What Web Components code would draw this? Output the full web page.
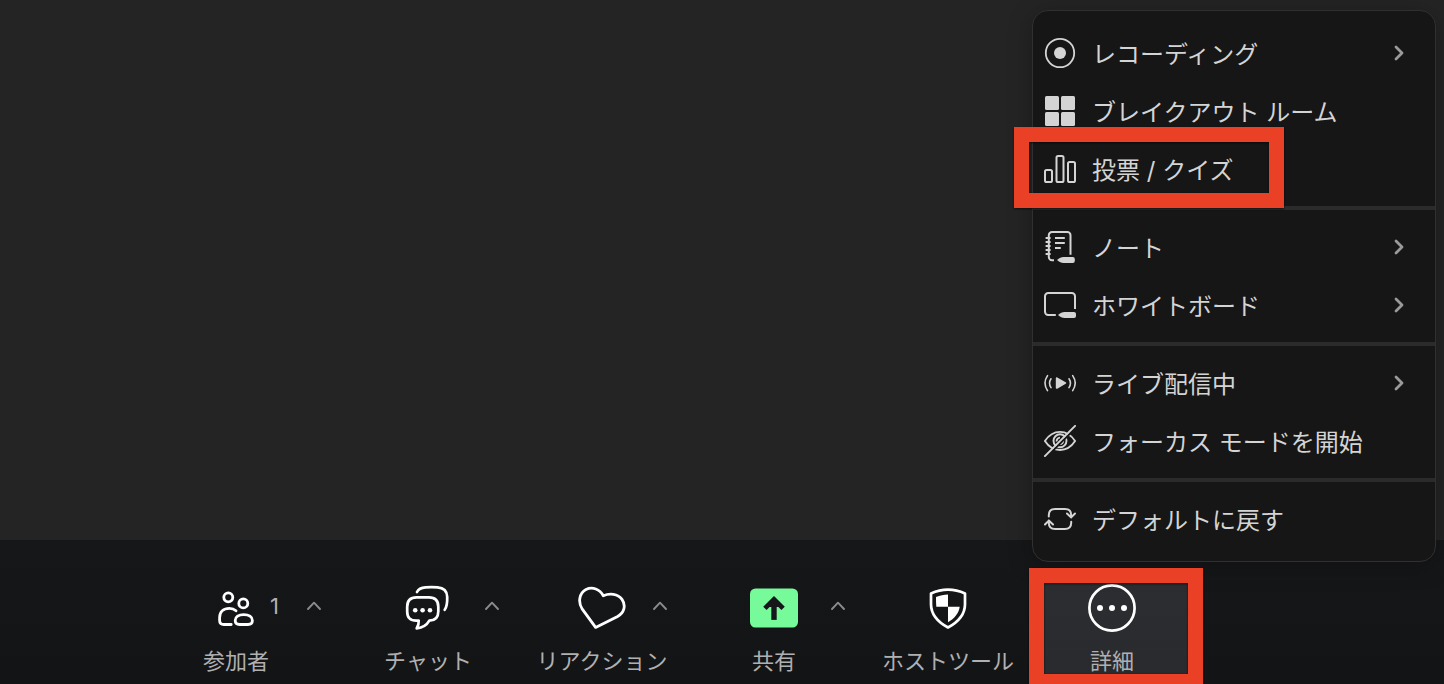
<!DOCTYPE html>
<html lang="ja">
<head>
<meta charset="utf-8">
<meta name="viewport" content="width=device-width, initial-scale=1">
<title>ミーティング</title>
<style>
  body {
    margin: 0;
    background: #242424;
    font-family: Inter, "Noto Sans CJK JP", sans-serif;
  }
</style>
</head>
<body>
<meeting-window>
  <more-menu slot="menu">
    <menu-group>
      <menu-item icon="record" submenu>レコーディング</menu-item>
      <menu-item icon="rooms">ブレイクアウト ルーム</menu-item>
      <menu-item icon="poll" marked>投票 / クイズ</menu-item>
    </menu-group>
    <menu-group>
      <menu-item icon="note" submenu>ノート</menu-item>
      <menu-item icon="board" submenu>ホワイトボード</menu-item>
    </menu-group>
    <menu-group>
      <menu-item icon="live" submenu>ライブ配信中</menu-item>
      <menu-item icon="focus">フォーカス モードを開始</menu-item>
    </menu-group>
    <menu-group>
      <menu-item icon="reset">デフォルトに戻す</menu-item>
    </menu-group>
  </more-menu>
  <tool-bar slot="toolbar">
    <tool-item icon="people" options="counted" count="1">参加者</tool-item>
    <tool-item icon="chat" options="wide">チャット</tool-item>
    <tool-item icon="heart" options="near">リアクション</tool-item>
    <tool-item icon="share" options="wide">共有</tool-item>
    <tool-item icon="shield">ホストツール</tool-item>
    <tool-item icon="more" active>詳細</tool-item>
  </tool-bar>
</meeting-window>

<script>
const ICONS = {
  // menu icons, 32 x 32
  record: [32, 32, '<circle cx="16" cy="16" r="14.2" fill="none" stroke="currentColor" stroke-width="1.8"/><circle cx="16" cy="16" r="6" fill="currentColor"/>'],
  rooms: [32, 32, '<g fill="currentColor"><rect x="1" y="1" width="14" height="14" rx="1.5"/><rect x="17" y="1" width="14" height="14" rx="1.5"/><rect x="1" y="17" width="14" height="14" rx="1.5"/><rect x="17" y="17" width="14" height="14" rx="1.5"/></g>'],
  poll: [32, 32, '<g fill="none" stroke="currentColor" stroke-width="2"><rect x="1" y="17" width="7" height="12" rx="1.6"/><rect x="12.500" y="3" width="7" height="26" rx="1.6"/><rect x="24" y="9" width="7" height="20" rx="1.6"/></g>'],
  note: [32, 32, '<g fill="none" stroke="currentColor" stroke-width="2"><path d="M10 29.2H8a3.2 3.2 0 0 1-3.2-3.2V4.200A3.200 3.200 0 0 1 8 1h15.300a3.200 3.200 0 0 1 3.200 3.200v19.600"/><path d="M1.600 7h5M1.600 11h5M1.600 15h5M1.600 19h5M1.600 23h5M11 7h9.800M11 12h9.800M11 17h5.800"/></g><path d="M13 28.900c2.200-2.100 4.300-3 6.500-3h9.300a2 2 0 0 1 2 2v2a2 2 0 0 1-2 2h-9.300c-2.200 0-4.300-.9-6.500-3z" fill="currentColor"/>'],
  board: [32, 32, '<path d="M11.800 26H4.200A3.200 3.200 0 0 1 1 22.800V7.200A3.200 3.200 0 0 1 4.200 4h23.600A3.200 3.200 0 0 1 31 7.200V20" fill="none" stroke="currentColor" stroke-width="2"/><path d="M14 26c2.200-2.100 4.300-3 6.500-3h9.500a2 2 0 0 1 2 2v2a2 2 0 0 1-2 2h-9.500c-2.200 0-4.300-.9-6.500-3z" fill="currentColor"/>'],
  live: [32, 32, '<path d="M11.800 11.300c0-.900.700-1.300 1.500-.9l8.400 4.900c.7.400.7 1.100 0 1.500l-8.400 4.900c-.8.400-1.500 0-1.500-.9z" fill="currentColor"/><g fill="none" stroke="currentColor" stroke-width="1.600" stroke-linecap="round"><path d="M7 11.800a8 8 0 0 0 0 8.800M3.500 8.600a13.500 13.500 0 0 0 0 15M25 11.800a8 8 0 0 1 0 8.800M28.700 8.600a13.500 13.500 0 0 1 0 15"/></g>'],
  focus: [32, 32, '<g fill="none" stroke="currentColor" stroke-width="1.900"><path d="M.9 16C5 9.800 10.200 6.900 16 6.900S27 9.800 31.100 16C27 22.200 21.800 25 16 25S5 22.200.9 16z"/><circle cx="16" cy="15.800" r="6.500"/><path d="M12.700 16.500a3.300 3.300 0 0 1 3.300-3.900M19.200 15.400a3.300 3.300 0 0 1-3.400 3.700"/></g><path d="M3 31.500L32 2.500" stroke="#161616" stroke-width="2"/><path d="M.9 31.100L31.100.9" stroke="currentColor" stroke-width="2" stroke-linecap="round"/>'],
  reset: [32, 32, '<g fill="none" stroke="currentColor" stroke-width="2" stroke-linecap="round" stroke-linejoin="round"><path d="M4.800 13.600v-1.400c0-4 2.300-6.300 6.300-6.300h9.800c4 0 6.300 2.300 6.300 6.300v2.200M23 10.500l4.200 3.900 3.800-3.900M27.200 18.800v1c0 4-2.300 6.300-6.300 6.300h-9.800c-4 0-6.300-2.300-6.300-6.300v-2.200M1 21.500l3.800-3.900L9 21.500"/></g>'],
  // toolbar icons, 48 x 48
  people: [48, 48, '<g fill="none" stroke="currentColor" stroke-width="2.800" stroke-linecap="round"><circle cx="16.300" cy="13.300" r="4.500"/><circle cx="31.300" cy="19.400" r="4.500"/><path d="M24 26.700c-1.800-1.600-4-2.300-6.600-2.300-5.800 0-9.800 3.500-9.800 9.300v2.500c0 2.900 1.300 4.300 4.300 4.300h7.300"/><path d="M31.800 30.600c5.200 0 8.600 2.400 8.600 6 0 2.600-1.600 3.900-4.400 3.900h-8.400c-2.800 0-4.400-1.300-4.400-3.900 0-3.600 3.400-6 8.600-6z"/></g>'],
  chat: [48, 48, '<g fill="none" stroke="currentColor" stroke-width="2.700" stroke-linecap="round" stroke-linejoin="round"><path d="M13 8c1.500-3.200 4-4.400 8.500-4.700 4-.3 8-.3 12 0 6.200.4 9.500 3.500 9.700 9.500.2 5.500 0 9.700-2.500 13"/><path d="M12.500 13.300h12.400c6.500 0 9.400 3.200 9.400 9.500v4.600c0 6-2.800 9-9 9.300-2.500 4.600-6.500 7-12.600 7.600 1.500-2.300 2.200-4.600 2-7.600h-2.200c-6.400 0-9.300-3-9.300-9.300v-4.600c0-6.300 2.900-9.500 9.300-9.500z"/></g><g fill="currentColor"><circle cx="11.200" cy="26.300" r="2.300"/><circle cx="18.600" cy="26.300" r="2.300"/><circle cx="26" cy="26.300" r="2.300"/></g>'],
  heart: [48, 48, '<path d="M17.600 43.400L4.300 25.200C-.4 18 1.400 9 8 5.500c6.700-3.200 13.700-.3 17.300 6.200C31.500 9 39.800 9.400 44 15.400c4.200 6.200 2.200 13.600-4.400 17.100z" fill="none" stroke="currentColor" stroke-width="2.800" stroke-linejoin="round"/>'],
  share: [48, 48, '<rect y="4.400" width="48" height="39.200" rx="5.500" fill="#77fb9a"/><path d="M24 15.300v20.600" stroke="#16171a" stroke-width="5.400"/><path d="M14.900 24.400l9.100-9 9.100 9" fill="none" stroke="#16171a" stroke-width="4.800"/><path d="M24 13.500l9 9.500H15z" fill="#16171a"/>'],
  shield: [48, 48, '<path d="M24 5.700c5.500 0 11.300 1.200 17 3.800v10.700c0 10.600-6.600 17.600-17 23.300C13.600 37.800 7 30.800 7 20.200V9.500c5.700-2.600 11.500-3.800 17-3.800z" fill="none" stroke="currentColor" stroke-width="2.700" stroke-linejoin="round"/><path d="M24 10.600v12.200H12.300c-.3-3.200-.3-6.600-.3-9.800 4-1.500 8-2.400 12-2.400zM24 22.800h11.700C34.800 29.500 30.500 34.500 24 38.200z" fill="currentColor"/>'],
  more: [48, 48, '<circle cx="24" cy="24" r="22.600" fill="none" stroke="currentColor" stroke-width="2.700"/><g fill="currentColor"><circle cx="12" cy="24" r="3"/><circle cx="24" cy="24" r="3"/><circle cx="36" cy="24" r="3"/></g>'],
  // small arrows
  chevron: [12, 16, '<path d="M3 2l6 6-6 6" fill="none" stroke="currentColor" stroke-width="2.800" stroke-linecap="round" stroke-linejoin="round"/>'],
  caret: [16, 10, '<path d="M2 8l6-6.300L14 8" fill="none" stroke="currentColor" stroke-width="1.900" stroke-linecap="round" stroke-linejoin="round"/>']
};

class UiIcon extends HTMLElement {
  connectedCallback() {
    if (this.shadowRoot) return;
    const [w, h, art] = ICONS[this.getAttribute('name')];
    this.attachShadow({ mode: 'open' }).innerHTML = `
      <style>:host { display: block; flex: none; } svg { display: block; }</style>
      <svg width="${w}" height="${h}" viewBox="0 0 ${w} ${h}" aria-hidden="true">${art}</svg>`;
  }
}
customElements.define('ui-icon', UiIcon);

// Red frame that calls attention to the element it lies over.
class MarkFrame extends HTMLElement {
  connectedCallback() {
    if (this.shadowRoot) return;
    this.attachShadow({ mode: 'open' }).innerHTML = `
      <style>
        :host {
          display: block;
          position: absolute;
          box-sizing: border-box;
          border: 15px solid #ea4025;
          filter: drop-shadow(0 1px 1px rgba(0, 0, 0, .6));
          pointer-events: none;
          z-index: 2;
        }
      </style>`;
  }
}
customElements.define('mark-frame', MarkFrame);

class MenuItem extends HTMLElement {
  connectedCallback() {
    if (this.shadowRoot) return;
    const sub = this.hasAttribute('submenu');
    this.attachShadow({ mode: 'open' }).innerHTML = `
      <style>
        :host { display: block; position: relative; }
        button {
          display: flex;
          align-items: center;
          gap: 16px;
          box-sizing: border-box;
          width: 100%;
          height: 58px;
          padding: 0 30px 0 11px;
          border: 0;
          background: none;
          color: #d4d4d4;
          font: inherit;
          font-size: 24px;
          line-height: 32px;
          text-align: left;
          white-space: nowrap;
        }
        .label { flex: 1; padding-top: 4px; }
        .arrow { color: #9a9a9a; }
        mark-frame { left: -19px; top: -13px; width: 270px; height: 81px; }
      </style>
      <button type="button" role="menuitem"${sub ? ' aria-haspopup="menu"' : ''}>
        <ui-icon name="${this.getAttribute('icon')}"></ui-icon>
        <span class="label"><slot></slot></span>
        ${sub ? '<ui-icon class="arrow" name="chevron"></ui-icon>' : ''}
      </button>
      ${this.hasAttribute('marked') ? '<mark-frame></mark-frame>' : ''}`;
  }
}
customElements.define('menu-item', MenuItem);

class MenuGroup extends HTMLElement {
  connectedCallback() {
    if (this.shadowRoot) return;
    this.attachShadow({ mode: 'open' }).innerHTML = `
      <style>
        :host { display: block; padding-bottom: 8px; border-bottom: 4px solid #2b2b2b; margin-bottom: 8px; }
        :host(:last-of-type) { padding-bottom: 0; border-bottom: 0; margin-bottom: 0; }
      </style>
      <slot></slot>`;
  }
}
customElements.define('menu-group', MenuGroup);

class MoreMenu extends HTMLElement {
  connectedCallback() {
    if (this.shadowRoot) return;
    this.attachShadow({ mode: 'open' }).innerHTML = `
      <style>
        :host {
          display: block;
          box-sizing: border-box;
          width: 404px;
          padding: 13px 0;
          border: 1px solid #303030;
          border-radius: 16px;
          background: #161616;
          box-shadow: 0 4px 24px rgba(0, 0, 0, .25);
        }
      </style>
      <div role="menu" aria-label="詳細"><slot></slot></div>`;
  }
}
customElements.define('more-menu', MoreMenu);

class ToolItem extends HTMLElement {
  connectedCallback() {
    if (this.shadowRoot) return;
    const count = this.getAttribute('count');
    const options = this.getAttribute('options');
    const active = this.hasAttribute('active');
    this.attachShadow({ mode: 'open' }).innerHTML = `
      <style>
        :host {
          display: grid;
          grid-template-columns: minmax(0, 1fr) 64px minmax(0, 1fr);
          position: relative;
          padding: 12px 0 10px;
        }
        :host([active]) {
          margin: 0 4px;
          background: linear-gradient(#2d2e32, #292a2d);
        }
        button { padding: 0; border: 0; background: none; font: inherit; }
        .main {
          grid-column: 2;
          display: flex;
          flex-direction: column;
          align-items: center;
          gap: 16px;
          color: #fff;
        }
        .label {
          color: #b0b0b1;
          font-size: 22px;
          line-height: 26px;
          white-space: nowrap;
        }
        .side {
          display: flex;
          align-items: center;
          height: 44px;
        }
        .count { width: 16px; margin-left: 2px; color: #b0b0b1; font-size: 22px; line-height: 26px; }
        .options { display: flex; justify-content: center; width: 28px; color: #8b8b8c; }
        .options.counted { margin-left: 14px; }
        .options.wide { margin-left: 18px; }
        .options.near { margin-left: 12px; }
        mark-frame { left: -3px; top: -4px; width: 174px; height: 121px; }
      </style>
      <button type="button" class="main"${active ? ' aria-expanded="true"' : ''}>
        <ui-icon name="${this.getAttribute('icon')}"></ui-icon>
        <span class="label"><slot></slot></span>
      </button>
      <div class="side">
        ${count ? `<span class="count">${count}</span>` : ''}
        ${options ? `<button type="button" class="options ${options}" aria-label="オプション"><ui-icon name="caret"></ui-icon></button>` : ''}
      </div>
      ${active ? '<mark-frame></mark-frame>' : ''}`;
  }
}
customElements.define('tool-item', ToolItem);

class ToolBar extends HTMLElement {
  connectedCallback() {
    if (this.shadowRoot) return;
    this.attachShadow({ mode: 'open' }).innerHTML = `
      <style>
        :host {
          display: grid;
          grid-template-columns: 140fr 192fr 192fr 156fr 188fr 160fr 168fr 248fr;
          padding-top: 32px;
          background: linear-gradient(#161719, #131416);
        }
        :host::before { content: ""; }
      </style>
      <slot></slot>`;
  }
}
customElements.define('tool-bar', ToolBar);

class MeetingWindow extends HTMLElement {
  connectedCallback() {
    if (this.shadowRoot) return;
    this.attachShadow({ mode: 'open' }).innerHTML = `
      <style>
        :host {
          display: flex;
          flex-direction: column;
          position: relative;
          height: 100vh;
          overflow: hidden;
        }
        main { flex: 1; background: #242424; }
        ::slotted([slot="menu"]) { position: absolute; right: 8px; bottom: 122px; z-index: 1; }
      </style>
      <main></main>
      <slot name="toolbar"></slot>
      <slot name="menu"></slot>`;
  }
}
customElements.define('meeting-window', MeetingWindow);
</script>
</body>
</html>
